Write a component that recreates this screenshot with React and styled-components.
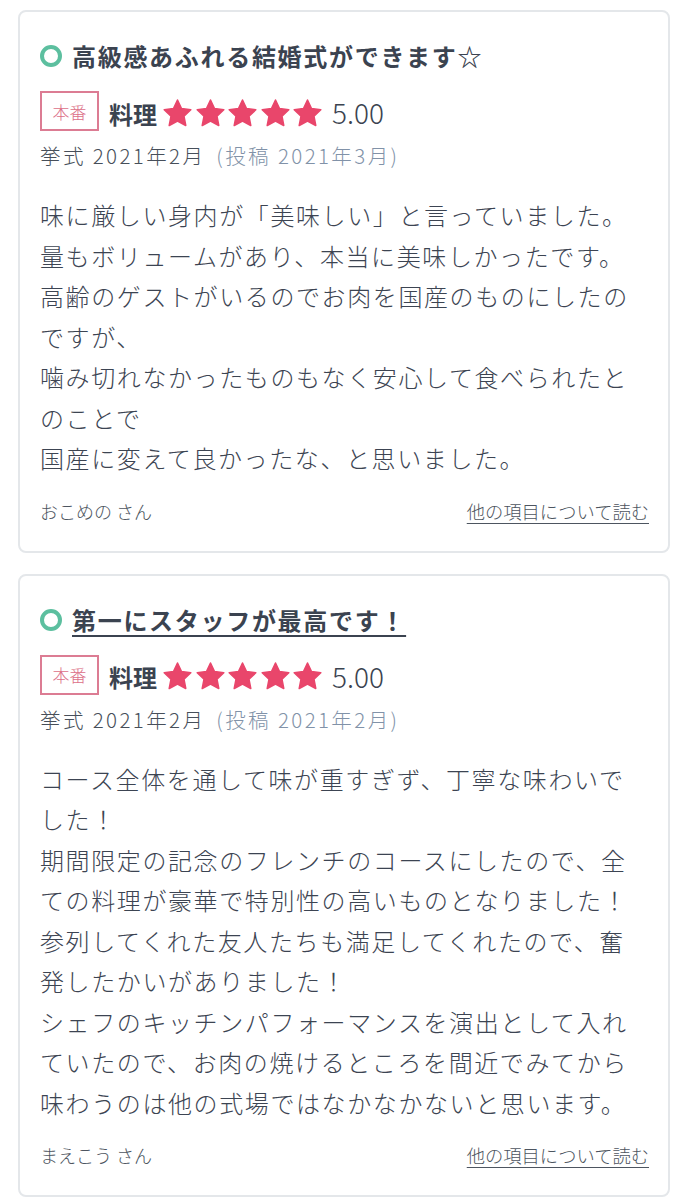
import React from "react";
import styled, { createGlobalStyle } from "styled-components";

const reviews = [
  {
    id: 1,
    title: "高級感あふれる結婚式ができます☆",
    linked: false,
    score: "5.00",
    held: "挙式 2021年2月",
    posted: "(投稿 2021年3月)",
    lines: [
      "味に厳しい身内が「美味しい」と言っていました。",
      "量もボリュームがあり、本当に美味しかったです。",
      "高齢のゲストがいるのでお肉を国産のものにしたのですが、",
      "噛み切れなかったものもなく安心して食べられたとのことで",
      "国産に変えて良かったな、と思いました。",
    ],
    author: "おこめの さん",
  },
  {
    id: 2,
    title: "第一にスタッフが最高です！",
    linked: true,
    score: "5.00",
    held: "挙式 2021年2月",
    posted: "(投稿 2021年2月)",
    lines: [
      "コース全体を通して味が重すぎず、丁寧な味わいでした！",
      "期間限定の記念のフレンチのコースにしたので、全ての料理が豪華で特別性の高いものとなりました！",
      "参列してくれた友人たちも満足してくれたので、奮発したかいがありました！",
      "シェフのキッチンパフォーマンスを演出として入れていたので、お肉の焼けるところを間近でみてから味わうのは他の式場ではなかなかないと思います。",
    ],
    author: "まえこう さん",
  },
];

const GlobalStyle = createGlobalStyle`
  body {
    margin: 0;
    background: #fff;
    font-family: "Noto Sans CJK JP", "Noto Sans", sans-serif;
    color: #3c4452;
  }
`;

const Star = () => (
  <svg width="31" height="31" viewBox="0 0 24 24">
    <path
      d="M12 1.6l3.1 6.6 7.2.9-5.3 5 1.4 7.2L12 17.8l-6.4 3.5 1.4-7.2-5.3-5 7.2-.9z"
      fill="#e9466b"
      stroke="#e9466b"
      strokeWidth="1.2"
      strokeLinejoin="round"
    />
  </svg>
);

const ReviewCard = ({ review }) => (
  <Card>
    <TitleRow>
      <Ring />
      <Title $linked={review.linked}>{review.title}</Title>
    </TitleRow>
    <RatingRow>
      <Badge>本番</Badge>
      <Category>料理</Category>
      <Stars>
        {[0, 1, 2, 3, 4].map((i) => (
          <Star key={i} />
        ))}
      </Stars>
      <Score>{review.score}</Score>
    </RatingRow>
    <DateLine>
      {review.held} <Posted>{review.posted}</Posted>
    </DateLine>
    <Body>
      {review.lines.map((line, i) => (
        <p key={i}>{line}</p>
      ))}
    </Body>
    <Footer>
      <Author>{review.author}</Author>
      <MoreLink href="#">他の項目について読む</MoreLink>
    </Footer>
  </Card>
);

const App = () => (
  <>
    <GlobalStyle />
    <List>
      {reviews.map((r) => (
        <ReviewCard key={r.id} review={r} />
      ))}
    </List>
  </>
);

const List = styled.div`
  display: flex;
  flex-direction: column;
  gap: 21px;
  padding: 10px 18px 0 18px;
`;
const Card = styled.section`
  border: 2px solid #e4e7ea;
  border-radius: 8px;
  padding: 26px 19px 28px 20px;
  background: #fff;
`;
const TitleRow = styled.div`
  display: flex;
  align-items: center;
  height: 36px;
  gap: 10px;
`;
const Ring = styled.span`
  width: 14px;
  height: 14px;
  border: 4px solid #5cbf9f;
  border-radius: 50%;
  flex: none;
`;
const Title = styled.h2`
  margin: 0;
  font-size: 24px;
  font-weight: 700;
  letter-spacing: 1.7px;
  color: #3b4350;
  line-height: 36px;
  text-decoration: ${(p) => (p.$linked ? "underline" : "none")};
  text-decoration-thickness: 2px;
  text-underline-offset: 5px;
`;
const RatingRow = styled.div`
  display: flex;
  align-items: center;
  margin-top: 17px;
  height: 40px;
`;
const Badge = styled.span`
  box-sizing: border-box;
  width: 59px;
  height: 40px;
  border: 2px solid #dc7c93;
  color: #dc7088;
  font-size: 17px;
  font-weight: 300;
  display: flex;
  align-items: center;
  justify-content: center;
  margin-right: 10px;
`;
const Category = styled.span`
  font-size: 24px;
  font-weight: 700;
  color: #3b4350;
  margin-right: 5px;
  margin-top: 4px;
`;
const Stars = styled.span`
  display: flex;
  gap: 1.5px;
  margin-right: 9px;
  margin-top: 4px;
`;
const Score = styled.span`
  font-size: 28px;
  font-weight: 300;
  color: #3b4350;
  margin-top: 2px;
`;
const DateLine = styled.div`
  margin-top: 10px;
  font-size: 20.5px;
  font-weight: 300;
  letter-spacing: 2.4px;
  line-height: 28px;
  color: #474f5a;
`;
const Posted = styled.span`
  color: #8192a8;
  margin-left: 4px;
`;
const Body = styled.div`
  margin-top: 26px;
  font-size: 24px;
  font-weight: 300;
  letter-spacing: 1.6px;
  line-height: 40.5px;
  color: #3c4452;
  p {
    margin: 0;
  }
`;
const Footer = styled.div`
  display: flex;
  justify-content: space-between;
  align-items: center;
  margin-top: 20px;
  height: 24px;
`;
const Author = styled.span`
  font-size: 18px;
  font-weight: 300;
  color: #4d5560;
`;
const MoreLink = styled.a`
  font-size: 18.3px;
  font-weight: 300;
  color: #4d5560;
  text-decoration: underline;
  text-underline-offset: 4px;
`;

export default App;
